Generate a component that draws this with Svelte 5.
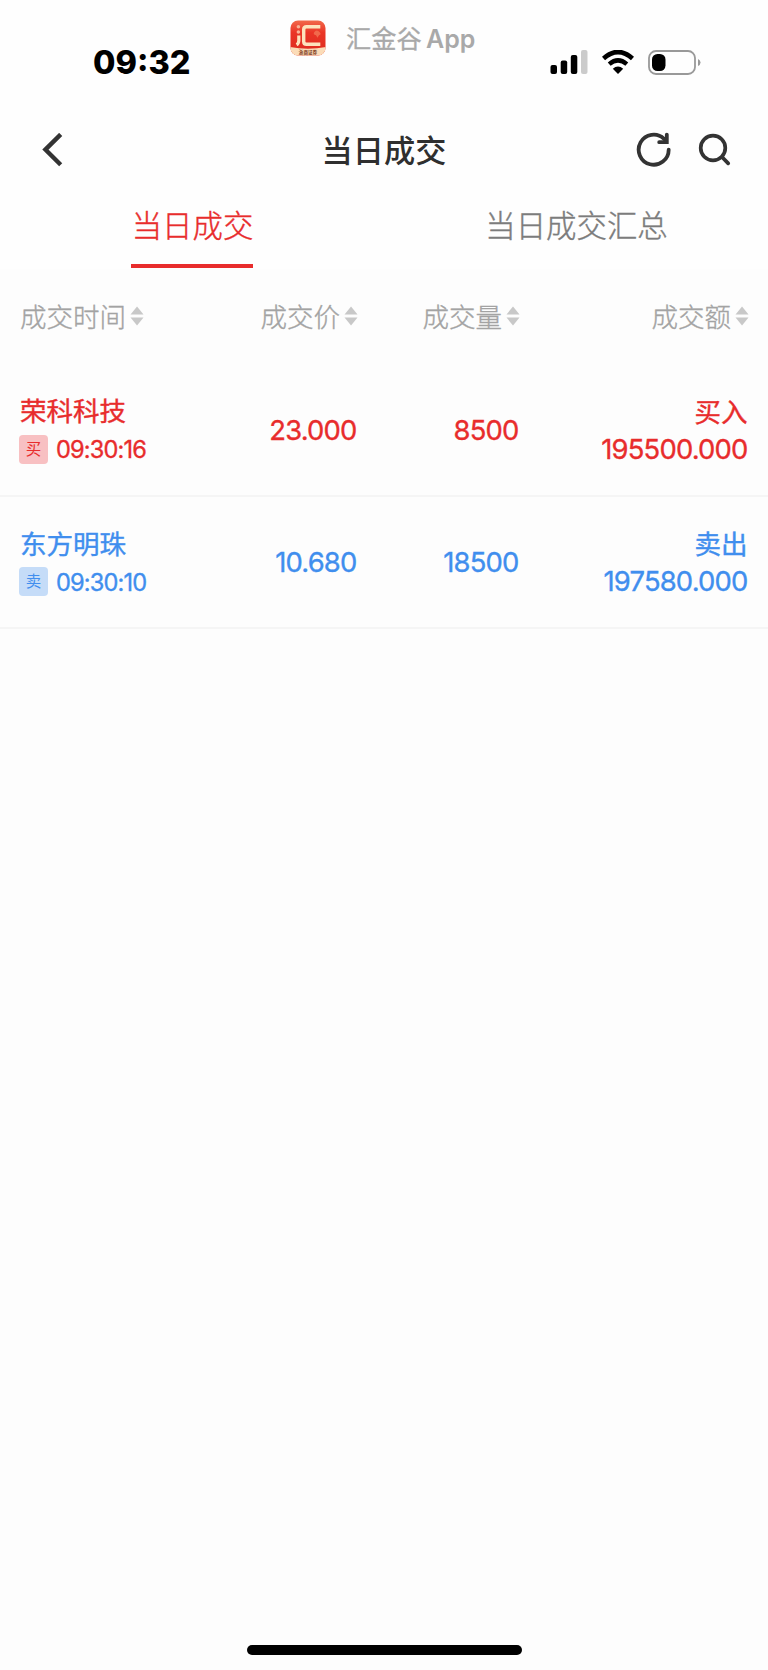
<script lang="ts">
  type Trade = {
    name: string;
    time: string;
    side: "buy" | "sell";
    price: string;
    volume: string;
    amount: string;
  };

  const tabs = ["当日成交", "当日成交汇总"];
  const columns = ["成交时间", "成交价", "成交量", "成交额"];
  const trades: Trade[] = [
    { name: "荣科科技", time: "09:30:16", side: "buy", price: "23.000", volume: "8500", amount: "195500.000" },
    { name: "东方明珠", time: "09:30:10", side: "sell", price: "10.680", volume: "18500", amount: "197580.000" },
  ];

  let activeTab = $state(0);
</script>

<div class="screen">
  <header class="status">
    <span class="clock">09:32</span>
    <div class="brand">
      <svg class="logo" width="36" height="36" viewBox="0 0 36 36">
        <defs>
          <linearGradient id="red" x1="0" y1="0" x2="0" y2="1">
            <stop offset="0" stop-color="#f26b4c" />
            <stop offset="0.35" stop-color="#ea3526" />
            <stop offset="1" stop-color="#dc2b1e" />
          </linearGradient>
          <clipPath id="round"><rect x="0.5" y="0.5" width="35" height="35" rx="7.5" /></clipPath>
        </defs>
        <g clip-path="url(#round)">
          <rect width="36" height="36" fill="url(#red)" />
          <path d="M0 27Q18 30.5 36 27V36H0Z" fill="#fbdcb8" />
          <path d="M30.300 6.700H16.500Q13.700 6.700 13.700 9.500V21.500Q13.700 24.300 16.500 24.300H30.300" fill="none" stroke="#fde3bd" stroke-width="3.400" />
          <path d="M8.800 15.500V20.500Q8.800 23.500 6.600 24.800" fill="none" stroke="#fde3bd" stroke-width="3.200" />
          <circle cx="8.400" cy="6.800" r="1.800" fill="#f7b295" />
          <circle cx="8.400" cy="12" r="1.800" fill="#f7b295" />
          <path d="M24 12.500q2.500-4 6 0q1.500 2-1 2.800l-1.500 2.500-1.500-2.500q-3-.8-2-2.800Z" fill="#f1694b" />
        </g>
        <text class="logo-text" x="18" y="33.800" text-anchor="middle">浙商证券</text>
      </svg>
      <span class="brand-name">汇金谷<b>App</b></span>
    </div>
    <div class="signals">
      <svg width="38" height="24" viewBox="0 0 38 24">
        <rect x="0.5" y="15" width="6.500" height="9" rx="2" />
        <rect x="10.700" y="10.500" width="6.500" height="13.500" rx="2" />
        <rect x="20.800" y="5" width="6.500" height="19" rx="2" />
        <rect x="31" y="0" width="6.500" height="24" rx="2" fill="#cbcbcb" />
      </svg>
      <svg class="wifi" width="32" height="24" viewBox="0 0 32 24">
        <path d="M1.500 8.500Q16-4.500 30.500 8.500" fill="none" stroke="#000" stroke-width="4.600" />
        <path d="M7.200 14.200Q16 6.600 24.800 14.200" fill="none" stroke="#000" stroke-width="4.400" />
        <path d="M16 24L10.800 18.700Q16 14.400 21.200 18.700Z" />
      </svg>
      <svg class="battery" width="54" height="25" viewBox="0 0 54 25">
        <rect x="1" y="1" width="46" height="23" rx="7" fill="none" stroke="#999" stroke-width="1.800" />
        <rect x="4" y="4" width="13.500" height="17" rx="5.500" />
        <path d="M50 9Q52.500 10 52.500 12.500Q52.500 15 50 16Z" fill="#999" />
      </svg>
    </div>
  </header>

  <nav class="bar">
    <button class="icon" aria-label="返回">
      <svg width="22" height="34" viewBox="0 0 22 34">
        <path d="M18.700 1.400L3.400 16.600L18.700 31.800" fill="none" stroke="#333" stroke-width="4.400" />
      </svg>
    </button>
    <h1>当日成交</h1>
    <div class="actions">
      <button class="icon" aria-label="刷新">
        <svg width="36" height="36" viewBox="0 0 36 36" fill="none" stroke="#333" stroke-width="3.800" stroke-linecap="round">
          <path d="M32.700 17.700A15 15 0 1 1 28 6.800L30 9" />
          <path d="M30.800 2.600V10.200H23.200" stroke-linejoin="miter" />
        </svg>
      </button>
      <button class="icon" aria-label="搜索">
        <svg width="34" height="34" viewBox="0 0 34 34" fill="none" stroke="#333" stroke-width="3.700" stroke-linecap="round">
          <circle cx="15" cy="15" r="12.300" />
          <path d="M24 24L30.200 30.400" />
        </svg>
      </button>
    </div>
  </nav>

  <div class="tabs">
    {#each tabs as tab, i}
      <button class="tab" class:active={activeTab === i} onclick={() => (activeTab = i)}>
        <span>{tab}</span>
      </button>
    {/each}
  </div>

  <main class="table">
    <div class="row head">
      {#each columns as column}
        <div class="cell">
          <span>{column}</span>
          <svg class="sort" width="14" height="20" viewBox="0 0 14 20" fill="#c8c8c8">
            <path d="M7 0.500L13.500 8.400H0.500Z" />
            <path d="M7 19.500L13.500 11.600H0.500Z" />
          </svg>
        </div>
      {/each}
    </div>
    {#each trades as t}
      <div class="row trade {t.side}">
        <div class="cell stock">
          <span class="cn">{t.name}</span>
          <div class="when">
            <span class="badge">{t.side === "buy" ? "买" : "卖"}</span>
            <span class="time">{t.time}</span>
          </div>
        </div>
        <div class="cell num">{t.price}</div>
        <div class="cell num">{t.volume}</div>
        <div class="cell total">
          <span class="cn">{t.side === "buy" ? "买入" : "卖出"}</span>
          <span class="num">{t.amount}</span>
        </div>
      </div>
    {/each}
  </main>

  <footer><div class="home"></div></footer>
</div>

<style>
  :global(body) { background: #fdfdfd; }
  .screen {
    width: 768px;
    height: 1670px;
    display: flex;
    flex-direction: column;
    background: #fdfdfd;
    font-family: Inter, "Noto Sans CJK SC", sans-serif;
    overflow: hidden;
  }
  button {
    border: 0;
    padding: 0;
    background: none;
    font: inherit;
    color: inherit;
    cursor: pointer;
  }
  svg { display: block; flex-shrink: 0; }

  .status {
    height: 104px;
    box-sizing: border-box;
    display: grid;
    grid-template-columns: 290px 1fr 218px;
    background: #fefefe;
  }
  .clock {
    padding: 43px 0 0 93px;
    font-size: 32.5px;
    line-height: 40px;
    font-weight: 800;
    color: #000;
  }
  .brand {
    display: flex;
    align-items: flex-start;
    padding-top: 20px;
    gap: 20px;
  }
  .logo-text {
    font-family: "Noto Sans CJK SC", sans-serif;
    font-size: 4.6px;
    font-weight: 700;
    fill: #7b3a1c;
  }
  .brand-name {
    font-size: 25.2px;
    line-height: 39px;
    color: #a9a9a9;
    font-weight: 400;
    -webkit-text-stroke: 0.3px currentColor;
    white-space: nowrap;
  }
  .brand-name b {
    margin-left: 4.5px;
    font-size: 25px;
    font-weight: 600;
    -webkit-text-stroke: 0;
  }
  .signals {
    display: flex;
    align-items: flex-start;
    padding-top: 50px;
  }
  .wifi { margin-left: 14px; }
  .battery { margin-left: 14px; }

  .bar {
    height: 92px;
    display: grid;
    grid-template-columns: 150px 1fr 150px;
    align-items: center;
    background: #fefefe;
  }
  .bar > .icon { padding-left: 42px; justify-self: start; }
  h1 {
    margin: 0;
    padding-top: 2px;
    text-align: center;
    font-size: 31.2px;
    line-height: 40px;
    font-weight: 500;
    color: #2f2f2f;
  }
  .actions { display: flex; gap: 26px; align-items: center; padding-left: 18px; }

  .tabs {
    height: 73px;
    display: flex;
    background: #fefefe;
  }
  .tab {
    flex: 1;
    display: flex;
    justify-content: center;
    font-size: 30.4px;
    font-weight: 300;
    -webkit-text-stroke: 0.4px currentColor;
    color: #7c7c7c;
  }
  .tab span {
    height: 68px;
    line-height: 61px;
    padding-left: 1px;
    border-bottom: 4px solid transparent;
  }
  .tab.active { color: #e82c2c; }
  .tab.active span { border-color: #e82c2c; }

  .row {
    display: grid;
    grid-template-columns: 190px 149px 162px 229px;
    padding: 0 19px;
  }
  .head { height: 95px; }
  .head .cell {
    display: flex;
    align-items: center;
    justify-content: flex-end;
    gap: 4px;
    padding-bottom: 2px;
    font-size: 26.5px;
    font-weight: 300;
    -webkit-text-stroke: 0.35px currentColor;
    color: #a3a3a3;
  }
  .head .cell:first-child { justify-content: flex-start; padding-left: 1px; }

  .trade {
    height: 132.5px;
    box-sizing: border-box;
    padding-top: 4px;
    border-bottom: 2px solid #f5f5f5;
  }
  .trade .cell {
    display: flex;
    flex-direction: column;
    align-items: flex-end;
    justify-content: center;
  }
  .trade .cell:not(.stock) { padding-right: 1.5px; }
  .trade > .num { padding-bottom: 3px; }
  .trade .stock { align-items: flex-start; }
  .cn {
    font-size: 26.5px;
    line-height: 36px;
    -webkit-text-stroke: 0.4px currentColor;
  }
  .stock .cn { padding-left: 1px; }
  .num {
    font-size: 27.4px;
    line-height: 38px;
    letter-spacing: -0.8px;
    -webkit-text-stroke: 0.35px currentColor;
  }
  .when { display: flex; align-items: center; height: 40px; gap: 8px; }
  .total .cn { letter-spacing: 0; }
  .total .num { line-height: 39px; }
  .badge {
    width: 29px;
    height: 29px;
    border-radius: 4px;
    font-size: 15.5px;
    line-height: 29px;
    text-align: center;
  }
  .time {
    padding-top: 1px;
    font-size: 23.6px;
    letter-spacing: -0.85px;
    -webkit-text-stroke: 0.35px currentColor;
  }
  .buy { color: #e82c2c; }
  .sell { color: #408eee; }
  .buy .badge { background: #f8c0c2; }
  .sell .badge { background: #c5dcf8; }

  footer {
    margin-top: auto;
    height: 25px;
    display: flex;
    justify-content: center;
  }
  .home { width: 275px; height: 10px; border-radius: 5px; background: #000; }
</style>
